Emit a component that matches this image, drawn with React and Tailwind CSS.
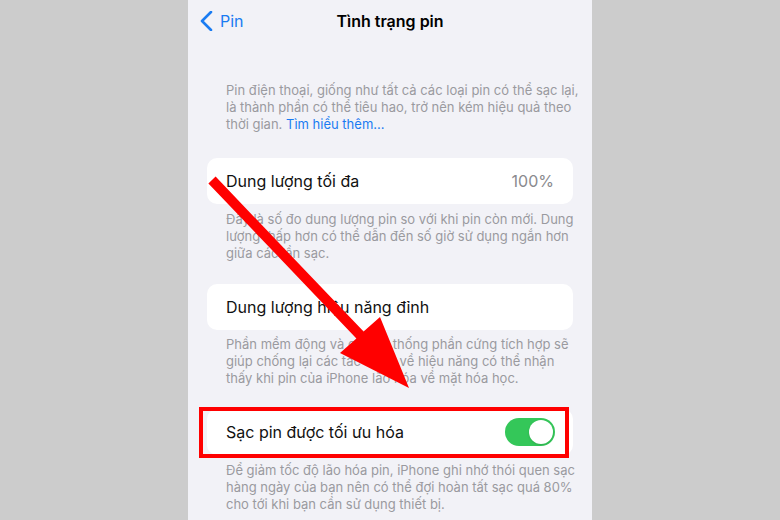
import React from 'react'

const font = { fontFamily: 'Inter, "Noto Sans", sans-serif' }

function Footer({ lines, className = '' }) {
  return (
    <div className={`px-[38px] text-[13px] leading-[17px] text-[#9a9a9f] ${className}`}>
      {lines.map((l, i) => (
        <div key={i} className="whitespace-nowrap">{l}</div>
      ))}
    </div>
  )
}

function Arrow() {
  return (
    <svg className="absolute left-0 top-0 pointer-events-none" width="780" height="520" viewBox="0 0 780 520">
      <polygon
        fill="#ff0000"
        points="215.6,176.6 363.6,331.6 380,317 409,388 340,353 356.4,338.4 208.4,183.4"
      />
    </svg>
  )
}

export default function App() {
  return (
    <div className="relative w-[780px] h-[520px] bg-[#cccccc] flex justify-center overflow-hidden" style={font}>
      <div className="w-[404px] h-full bg-[#f2f2f7] flex flex-col">
        {/* nav bar */}
        <div className="relative h-[42px] flex items-center justify-center">
          <div className="absolute left-[12px] top-0 h-full flex items-center gap-[6px] text-[#1a7cf2]">
            <svg width="14" height="20" viewBox="0 0 14 20">
              <path d="M11 1 L2 10 L11 19" fill="none" stroke="#1a7cf2" strokeWidth="2.6" strokeLinecap="round" strokeLinejoin="round" />
            </svg>
            <span className="text-[16px]">Pin</span>
          </div>
          <span className="text-[16px] font-semibold text-black">Tình trạng pin</span>
        </div>

        <div className="pt-[40px] px-[38px] text-[13px] leading-[17px] text-[#9a9a9f]">
          <div className="whitespace-nowrap">Pin điện thoại, giống như tất cả các loại pin có thể sạc lại,</div>
          <div className="whitespace-nowrap">là thành phần có thể tiêu hao, trở nên kém hiệu quả theo</div>
          <div className="whitespace-nowrap">
            thời gian. <span className="text-[#1a7cf2]">Tìm hiểu thêm...</span>
          </div>
        </div>

        <div className="mt-[25px] mx-[19px] h-[46px] bg-white rounded-[10px] flex items-center justify-between pl-[19px] pr-[19px]">
          <span className="text-[16px] text-[#111]">Dung lượng tối đa</span>
          <span className="text-[16px] text-[#8a8a8e]">100%</span>
        </div>
        <Footer
          className="mt-[7px]"
          lines={[
            'Đây là số đo dung lượng pin so với khi pin còn mới. Dung',
            'lượng thấp hơn có thể dẫn đến số giờ sử dụng ngắn hơn',
            'giữa các lần sạc.',
          ]}
        />

        <div className="mt-[22px] mx-[19px] h-[46px] bg-white rounded-[10px] flex items-center pl-[19px]">
          <span className="text-[16px] text-[#111]">Dung lượng hiệu năng đỉnh</span>
        </div>
        <Footer
          className="mt-[6px]"
          lines={[
            'Phần mềm động và các hệ thống phần cứng tích hợp sẽ',
            'giúp chống lại các tác động về hiệu năng có thể nhận',
            'thấy khi pin của iPhone lão hóa về mặt hóa học.',
          ]}
        />

        <div className="relative mt-[22px] mx-[19px] h-[46px] bg-white rounded-[10px] flex items-center justify-between pl-[19px] pr-[18px]">
          <span className="text-[16px] text-[#111]">Sạc pin được tối ưu hóa</span>
          <div className="w-[50px] h-[28px] rounded-full bg-[#34c759] flex items-center justify-end pr-[2px]">
            <div className="w-[24px] h-[24px] rounded-full bg-white shadow" />
          </div>
          <div className="absolute left-[-8px] right-[4px] top-[-2px] bottom-[-3px] border-[4px] border-[#ff0000]" />
        </div>
        <Footer
          className="mt-[7px]"
          lines={[
            'Để giảm tốc độ lão hóa pin, iPhone ghi nhớ thói quen sạc',
            'hàng ngày của bạn nên có thể đợi hoàn tất sạc quá 80%',
            'cho tới khi bạn cần sử dụng thiết bị.',
          ]}
        />
      </div>
      <Arrow />
    </div>
  )
}
